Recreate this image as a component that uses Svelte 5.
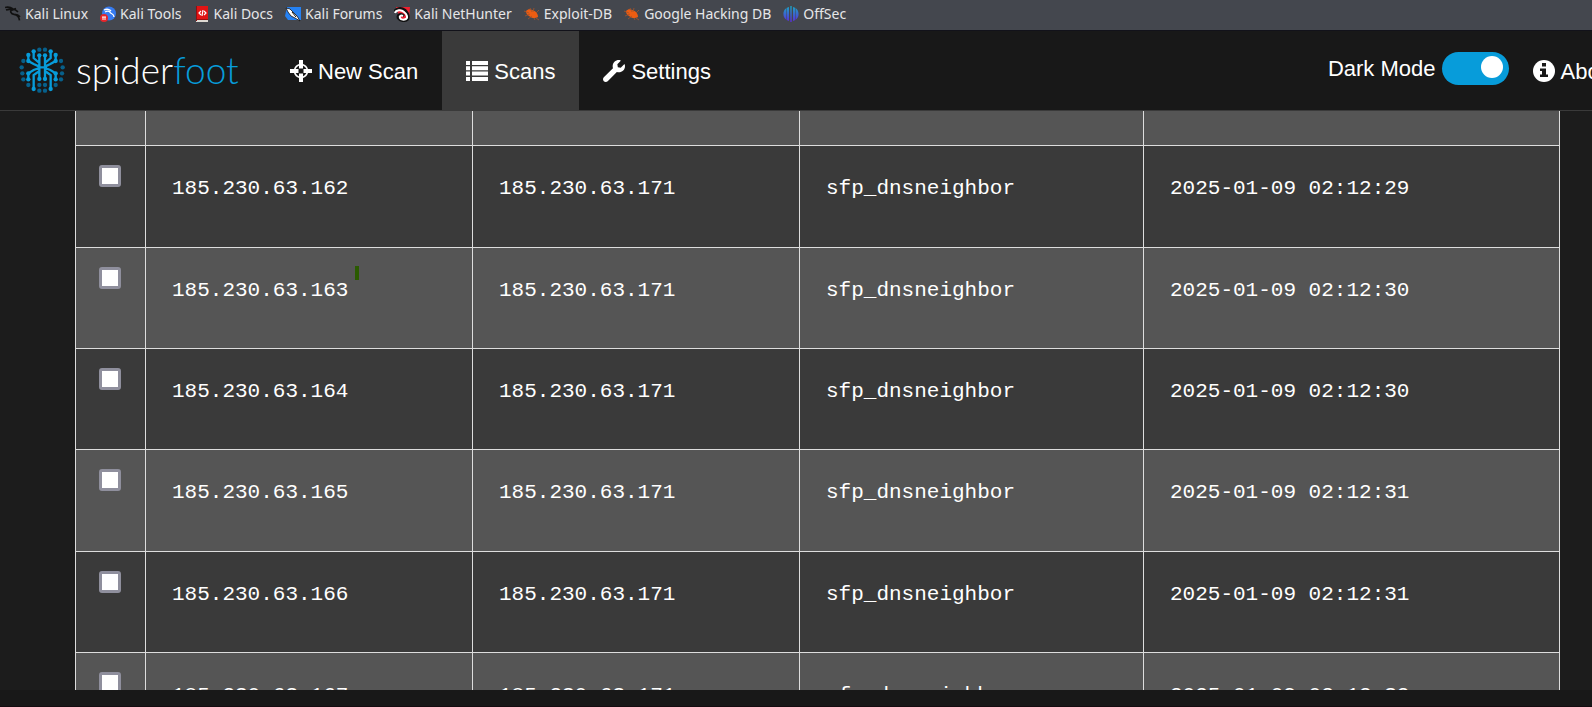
<script>
  const bookmarks = [
    { name: 'Kali Linux', icon: 'dragon' },
    { name: 'Kali Tools', icon: 'tools' },
    { name: 'Kali Docs', icon: 'docs' },
    { name: 'Kali Forums', icon: 'forums' },
    { name: 'Kali NetHunter', icon: 'nethunter' },
    { name: 'Exploit-DB', icon: 'bug' },
    { name: 'Google Hacking DB', icon: 'bug' },
    { name: 'OffSec', icon: 'offsec' }
  ];

  const rows = [
    { ip: '185.230.63.162', time: '2025-01-09 02:12:29' },
    { ip: '185.230.63.163', time: '2025-01-09 02:12:30', marked: true },
    { ip: '185.230.63.164', time: '2025-01-09 02:12:30' },
    { ip: '185.230.63.165', time: '2025-01-09 02:12:31' },
    { ip: '185.230.63.166', time: '2025-01-09 02:12:31' },
    { ip: '185.230.63.167', time: '2025-01-09 02:12:32' }
  ];

  let dark = $state(true);

  const lit = [
    [101, 65], [152, 65], [85, 76], [167, 76], [118, 77], [135, 77],
    [85, 94], [167, 94], [85, 131], [167, 131], [85, 149], [167, 149],
    [118, 148], [135, 148], [101, 178], [152, 178]
  ];
  const dim = [
    [118, 60], [135, 60], [70, 94], [183, 94], [65, 113], [188, 113],
    [67, 131], [186, 131], [70, 149], [183, 149], [85, 166], [167, 166],
    [118, 166], [135, 166], [118, 183], [135, 183]
  ];
</script>

<div class="page">
  <div class="bookmarks">
    {#each bookmarks as b}
      <a href="#top" class="bookmark">
        <svg width="16" height="16" viewBox="0 0 16 16" aria-hidden="true">
          {#if b.icon === 'dragon'}
            <path d="M0 1.500C3 .8 6 1.500 8 3M1 4c3-1.200 5-.8 7.500.2M8 3c2 .6 3 1 5 2.800M7 3.500C4.500 5 6 8 9 8.300c3 .2 5 2.200 5.500 6M8 3.500l3-1M9.500 8.300c2.500.2 4 .8 5.500 2.500" fill="none" stroke="#111" stroke-width="1.700" />
          {:else if b.icon === 'tools'}
            <circle cx="9" cy="7.500" r="7" fill="#367bf0" />
            <path d="M4 4c3-1.500 6-.5 7 1M5 6c2-1 4-1 5 0 0 2 4 1 4 5" fill="none" stroke="#fff" stroke-width="1.300" />
            <circle cx="4" cy="12" r="4" fill="#e5262b" />
            <path d="M2 11h4M3 11v3M5 11v3" stroke="#fff" />
          {:else if b.icon === 'docs'}
            <path d="M2 0h12v13H2z" fill="#e01414" />
            <path d="M2 13h12v3H2z" fill="#ded9d2" />
            <path d="M2 13h12v1H2z" fill="#9a0e0e" />
            <path d="M2 0h1v15H2z" fill="#8e0f12" />
            <path d="M7 5L5 7l2 2M10 5l2 2-2 2M9 4L8 10" fill="none" stroke="#fff" stroke-width="1.200" />
          {:else if b.icon === 'forums'}
            <path d="M2 1h14v13H3L0 10z" fill="#2581f2" />
            <path d="M1 2l4 1 4 4 3 3 3 5-5-3-4-2-3-4z" fill="#fff" stroke="#111" stroke-width=".8" />
            <path d="M7 6l4 5" stroke="#111" stroke-width="1" />
          {:else if b.icon === 'nethunter'}
            <path d="M2 1h14l-1 12H6z" fill="#ef2030" />
            <path d="M0 6C2 2 7 1 11 4c3 3 4 6 3 9-3 3-8 2-10-1-1-4 3-5 6-2" fill="none" stroke="#111" stroke-width="2.500" />
            <path d="M1 7c1-3 6-4 9-1 3 2 4 6 2 7s-5 1-6-1 1-3 3-2" fill="none" stroke="#fff" stroke-width="2" />
          {:else if b.icon === 'bug'}
            <path d="M2 5c2-2 4-2 6-1 4 1 6 4 6 7-3 2-7 1-9-1C3 9 2 7 2 5z" fill="#ee5d12" />
            <path d="M0 5l5 2M1 10l5-2M4 13l4-3M6 2l2 4M10 2l-1 4M12 12l3 2M12 7l3-3M10 12l1 2" stroke="#a85328" stroke-width=".8" />
          {:else}
            <defs>
              <linearGradient id="offsec" x1="0" y1="0" x2="0" y2="1">
                <stop offset="0" stop-color="#19a6c4" />
                <stop offset="1" stop-color="#5a2bd8" />
              </linearGradient>
            </defs>
            <path d="M7.300 0h1.400v16H7.300zM6 1v14C4.500 14.500 2 13.500 1 11-.5 7 1 2 6 1zM10 1v14c1.500-.5 4-1.500 5-4 1.500-4 0-9-5-10z" fill="url(#offsec)" />
            <path d="M3.500 2v12M12.500 2v12" stroke="#44474e" stroke-width=".5" />
          {/if}
        </svg>
        <span>{b.name}</span>
      </a>
    {/each}
  </div>

  <nav class="nav">
    <a href="#home" class="brand">
      <svg width="46" height="46" viewBox="57 52 138 138" aria-hidden="true">
        <g fill="#07608b">
          {#each dim as [x, y]}<circle cx={x} cy={y} r="6.500" />{/each}
        </g>
        <path
          d="M118 77v71M135 77v71M112 113h29M101 65v20l17 15M152 65v20l-17 15M85 76v18l16 9 17 8M167 76v18l-16 9-16 8M85 149v-18l16-10 17-6M167 149v-18l-16-10-16-6M101 178v-42l17-12M152 178v-42l-17-12"
          fill="none" stroke="#079cda" stroke-width="7" />
        <g fill="#079cda">
          {#each lit as [x, y]}<circle cx={x} cy={y} r="6.500" />{/each}
        </g>
      </svg>
      <span class="word">spider<span class="foot">foot</span></span>
    </a>

    <a href="#new" class="item">
      <svg width="22" height="22" viewBox="0 0 22 22" aria-hidden="true">
        <circle cx="11" cy="11" r="6.500" fill="none" stroke="#fff" stroke-width="1.600" />
        <path d="M9 0h4v8.500H9zM9 13.500h4V22H9zM0 9h8.500v4H0zM13.500 9H22v4h-8.500z" fill="#fff" />
      </svg>
      <span>New Scan</span>
    </a>
    <a href="#scans" class="item active">
      <svg width="22" height="22" viewBox="0 0 22 22" aria-hidden="true">
        <path d="M0 1h4v4H0zM6 1h16v4H6zM0 6.300h4v4H0zM6 6.300h16v4H6zM0 11.600h4v4H0zM6 11.600h16v4H6zM0 17h4v4H0zM6 17h16v4H6z" fill="#fff" />
      </svg>
      <span>Scans</span>
    </a>
    <a href="#settings" class="item">
      <svg width="22" height="22" viewBox="0 0 512 512" aria-hidden="true">
        <path fill="#fff" d="M507.730 109.100c-2.240-9.030-13.540-12.090-20.120-5.510l-74.360 74.360-67.880-11.310-11.310-67.880 74.360-74.360c6.620-6.620 3.430-17.900-5.660-20.160-47.380-11.740-99.550.91-136.580 37.930-39.640 39.640-50.550 97.100-34.050 147.200L18.740 402.760c-24.990 24.990-24.990 65.510 0 90.500 24.990 24.990 65.510 24.990 90.500 0l213.210-213.210c50.120 16.710 107.470 5.680 147.370-34.220 37.070-37.070 49.700-89.320 37.910-136.730z" />
      </svg>
      <span>Settings</span>
    </a>

    <div class="right">
      <label class="mode">
        <span>Dark Mode</span>
        <input type="checkbox" class="switch" bind:checked={dark} />
      </label>
      <a href="#about" class="item">
        <svg width="22" height="22" viewBox="0 0 22 22" aria-hidden="true">
          <circle cx="11" cy="11" r="11" fill="#fff" />
          <path d="M9 3h4v3.500H9zM7 8.500h6v6h2V17H7v-2.500h2V11H7z" fill="#181818" />
        </svg>
        <span>About</span>
      </a>
    </div>
  </nav>

  <main class="content">
    <table>
      <colgroup>
        <col class="c-check" />
        <col class="c-data" />
        <col class="c-data" />
        <col class="c-module" />
        <col />
      </colgroup>
      <tbody>
        <tr class="lead"><td></td><td></td><td></td><td></td><td></td></tr>
        {#each rows as row}
          <tr>
            <td class="check"><input type="checkbox" aria-label={row.ip} /></td>
            <td>{row.ip}{#if row.marked}<span class="mark"></span>{/if}</td>
            <td>185.230.63.171</td>
            <td>sfp_dnsneighbor</td>
            <td>{row.time}</td>
          </tr>
        {/each}
      </tbody>
    </table>
  </main>
  <footer></footer>
</div>

<style>
  :global(body) {
    margin: 0;
    background: #1c1c1c;
  }

  .page {
    display: flex;
    flex-direction: column;
    height: 100vh;
    overflow: hidden;
    background: #1c1c1c;
    color: #fff;
    font-family: 'Liberation Sans', Arial, sans-serif;
    font-size: 22px;
  }

  a {
    color: inherit;
    text-decoration: none;
  }

  svg {
    flex: none;
  }

  .bookmarks {
    flex: none;
    display: flex;
    align-items: center;
    box-sizing: border-box;
    gap: 12px;
    height: 31px;
    padding: 0 0 2px 5px;
    background: #44474e;
    border-bottom: 1px solid #12121a;
    color: #e6e6e8;
    font-family: 'Noto Sans', sans-serif;
    font-size: 14px;
    line-height: 20px;
    white-space: nowrap;
  }

  .bookmark {
    display: flex;
    align-items: center;
    gap: 4px;
  }

  .nav {
    flex: none;
    display: flex;
    height: 79px;
    overflow: hidden;
    background: #181818;
    border-bottom: 1px solid #3a3a3a;
    white-space: nowrap;
  }

  .brand {
    display: flex;
    align-items: center;
    box-sizing: border-box;
    gap: 11px;
    width: 266px;
    padding: 0 0 2px 19px;
  }

  .word {
    font-family: Lato, sans-serif;
    font-weight: 300;
    font-size: 37px;
    line-height: 40px;
  }

  .foot {
    color: #079cda;
  }

  .item {
    display: flex;
    align-items: center;
    gap: 6px;
    padding: 0 24px;
  }

  .item span {
    padding-top: 2px;
  }

  .active {
    background: #3a3a3a;
  }

  .right {
    display: flex;
    margin-left: auto;
    margin-right: -50px;
  }

  .mode {
    display: flex;
    align-items: center;
    gap: 6px;
    padding-bottom: 4px;
  }

  .switch {
    appearance: none;
    display: flex;
    box-sizing: border-box;
    width: 67px;
    height: 33px;
    margin: 0;
    padding: 4px 6px;
    border-radius: 17px;
    background: #555;
  }

  .switch:checked {
    justify-content: flex-end;
    background: #079cda;
  }

  .switch::before {
    content: '';
    width: 22px;
    height: 22px;
    border-radius: 50%;
    background: #fff;
  }

  .content {
    flex: 1;
    min-height: 0;
    overflow: hidden;
    padding: 0 32px 0 75px;
  }

  table {
    width: 100%;
    table-layout: fixed;
    border-spacing: 0;
    border-left: 1px solid #ddd;
    font-family: 'Liberation Mono', monospace;
    font-size: 21px;
    line-height: 30px;
  }

  .c-check {
    width: 70px;
  }

  .c-data {
    width: 327px;
  }

  .c-module {
    width: 344px;
  }

  td {
    box-sizing: border-box;
    height: 101px;
    padding: 28px 26px 0;
    border-right: 1px solid #ddd;
    border-bottom: 1px solid #ddd;
    vertical-align: top;
    white-space: nowrap;
  }

  tr {
    background: #3a3a3a;
  }

  tr:nth-child(odd) {
    background: #555;
  }

  tr:nth-child(3n + 2) td {
    height: 102px;
  }

  .lead td {
    height: 35px;
    padding: 0;
  }

  .check {
    padding: 19px 1px 0 0;
    line-height: 0;
    text-align: center;
  }

  .check input {
    appearance: none;
    box-sizing: border-box;
    width: 22px;
    height: 22px;
    margin: 0;
    border: 3px solid #8f8f9d;
    border-radius: 3px;
    background: #fff;
  }

  td:has(.mark) {
    position: relative;
  }

  .mark {
    position: absolute;
    top: 18px;
    left: 209px;
    width: 4px;
    height: 14px;
    background: #2a5a00;
  }

  footer {
    flex: none;
    height: 16px;
    background: #181818;
    border-bottom: 1px solid #150b10;
  }
</style>
